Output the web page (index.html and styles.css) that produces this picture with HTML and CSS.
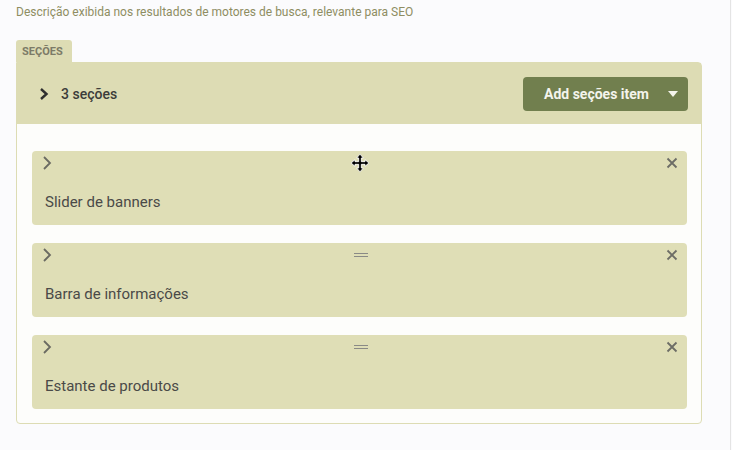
FILE: index.html
```html
<!DOCTYPE html>
<html lang="pt">
<head>
<meta charset="utf-8">
<link rel="stylesheet" href="styles.css">
</head>
<body>
<div class="page">
  <p class="desc">Descrição exibida nos resultados de motores de busca, relevante para SEO</p>
  <div class="tab">SEÇÕES</div>
  <div class="panel">
    <div class="panel-head">
      <div class="head-left">
        <svg class="chev-bold" width="10" height="14" viewBox="0 0 10 14"><path d="M2 2 L7.5 7 L2 12" fill="none" stroke="#2f2f2f" stroke-width="2.4"/></svg>
        <span class="count">3 seções</span>
      </div>
      <button class="add-btn"><span>Add seções item</span><svg width="10" height="6" viewBox="0 0 10 6"><path d="M0 0 H10 L5 6 Z" fill="#f4f4ec"/></svg></button>
    </div>
    <div class="panel-body">
      <div class="item">
        <div class="item-top">
          <svg class="chev" width="10" height="16" viewBox="0 0 10 16"><path d="M2 2 L8 8 L2 14" fill="none" stroke="#6a6a62" stroke-width="1.8"/></svg>
          <svg class="move" width="20" height="20" viewBox="0 0 18 18">
            <path d="M9 1 L12 4.5 H10.2 V7.8 H13.5 V6 L17 9 L13.5 12 V10.2 H10.2 V13.5 H12 L9 17 L6 13.5 H7.8 V10.2 H4.5 V12 L1 9 L4.5 6 V7.8 H7.8 V4.5 H6 Z" fill="#000" stroke="#fff" stroke-width="0.8"/>
          </svg>
          <svg class="close" width="12" height="12" viewBox="0 0 12 12"><path d="M1.5 1.5 L10.5 10.5 M10.5 1.5 L1.5 10.5" stroke="#6d6d66" stroke-width="1.8"/></svg>
        </div>
        <div class="item-title">Slider de banners</div>
      </div>
      <div class="item">
        <div class="item-top">
          <svg class="chev" width="10" height="16" viewBox="0 0 10 16"><path d="M2 2 L8 8 L2 14" fill="none" stroke="#6a6a62" stroke-width="1.8"/></svg>
          <svg class="handle" width="16" height="8" viewBox="0 0 16 8"><path d="M1 2.5 H15 M1 5.5 H15" stroke="#8a8a86" stroke-width="1.2"/></svg>
          <svg class="close" width="12" height="12" viewBox="0 0 12 12"><path d="M1.5 1.5 L10.5 10.5 M10.5 1.5 L1.5 10.5" stroke="#6d6d66" stroke-width="1.8"/></svg>
        </div>
        <div class="item-title">Barra de informações</div>
      </div>
      <div class="item">
        <div class="item-top">
          <svg class="chev" width="10" height="16" viewBox="0 0 10 16"><path d="M2 2 L8 8 L2 14" fill="none" stroke="#6a6a62" stroke-width="1.8"/></svg>
          <svg class="handle" width="16" height="8" viewBox="0 0 16 8"><path d="M1 2.5 H15 M1 5.5 H15" stroke="#8a8a86" stroke-width="1.2"/></svg>
          <svg class="close" width="12" height="12" viewBox="0 0 12 12"><path d="M1.5 1.5 L10.5 10.5 M10.5 1.5 L1.5 10.5" stroke="#6d6d66" stroke-width="1.8"/></svg>
        </div>
        <div class="item-title">Estante de produtos</div>
      </div>
    </div>
  </div>
</div>
</body>
</html>
```
FILE: styles.css
```css
* { box-sizing: border-box; }
html, body { margin: 0; padding: 0; }
body {
  background: #fbfbfd;
  font-family: Roboto, "Liberation Sans", sans-serif;
  width: 732px;
  height: 450px;
  overflow: hidden;
}
.page {
  width: 731px;
  height: 450px;
  border-right: 1px solid #e4e4e4;
  padding: 4px 0 0 16px;
}
.desc {
  margin: 0;
  font-size: 12px;
  line-height: 16px;
  color: #8e8d62;
  height: 36px;
}
.tab {
  display: inline-block;
  width: 56px;
  height: 22px;
  line-height: 23px;
  padding-left: 6px;
  background: #dddcb4;
  color: #7c7b67;
  font-size: 11px;
  font-weight: 700;
  border-radius: 3px 3px 0 0;
  vertical-align: top;
}
.panel {
  width: 686px;
  height: 362px;
  border: 1px solid #dddcb4;
  border-radius: 0 4px 4px 4px;
  background: #fdfdfb;
}
.panel-head {
  height: 61px;
  background: #dddcb4;
  display: flex;
  align-items: center;
  justify-content: space-between;
  padding: 0 13px 0 22px;
}
.head-left {
  display: flex;
  align-items: center;
  gap: 12px;
}
.chev-bold { display: block; margin-top: 1px; }
.count {
  font-size: 14px;
  font-weight: 500;
  color: #3c3c3a;
}
.add-btn {
  width: 165px;
  height: 34px;
  border: none;
  border-radius: 4px;
  background: #717f4e;
  color: #f4f4ec;
  font-family: Roboto, "Liberation Sans", sans-serif;
  font-size: 14px;
  font-weight: 700;
  display: flex;
  align-items: center;
  justify-content: space-between;
  padding: 0 10px 0 21px;
}
.panel-body {
  padding: 27px 14px 14px 15px;
  display: flex;
  flex-direction: column;
  gap: 18px;
}
.item {
  height: 74px;
  background: #dfdeb6;
  border-radius: 4px;
}
.item-top {
  height: 24px;
  display: flex;
  align-items: center;
  justify-content: space-between;
  padding: 0 9px 0 10px;
}
.chev, .close, .handle, .move { display: block; }
.move { margin-left: 2px; }
.handle { margin-left: 4px; }
.item-title {
  margin-top: 17px;
  padding-left: 13px;
  font-size: 15px;
  line-height: 20px;
  color: #4a4a48;
}
```
